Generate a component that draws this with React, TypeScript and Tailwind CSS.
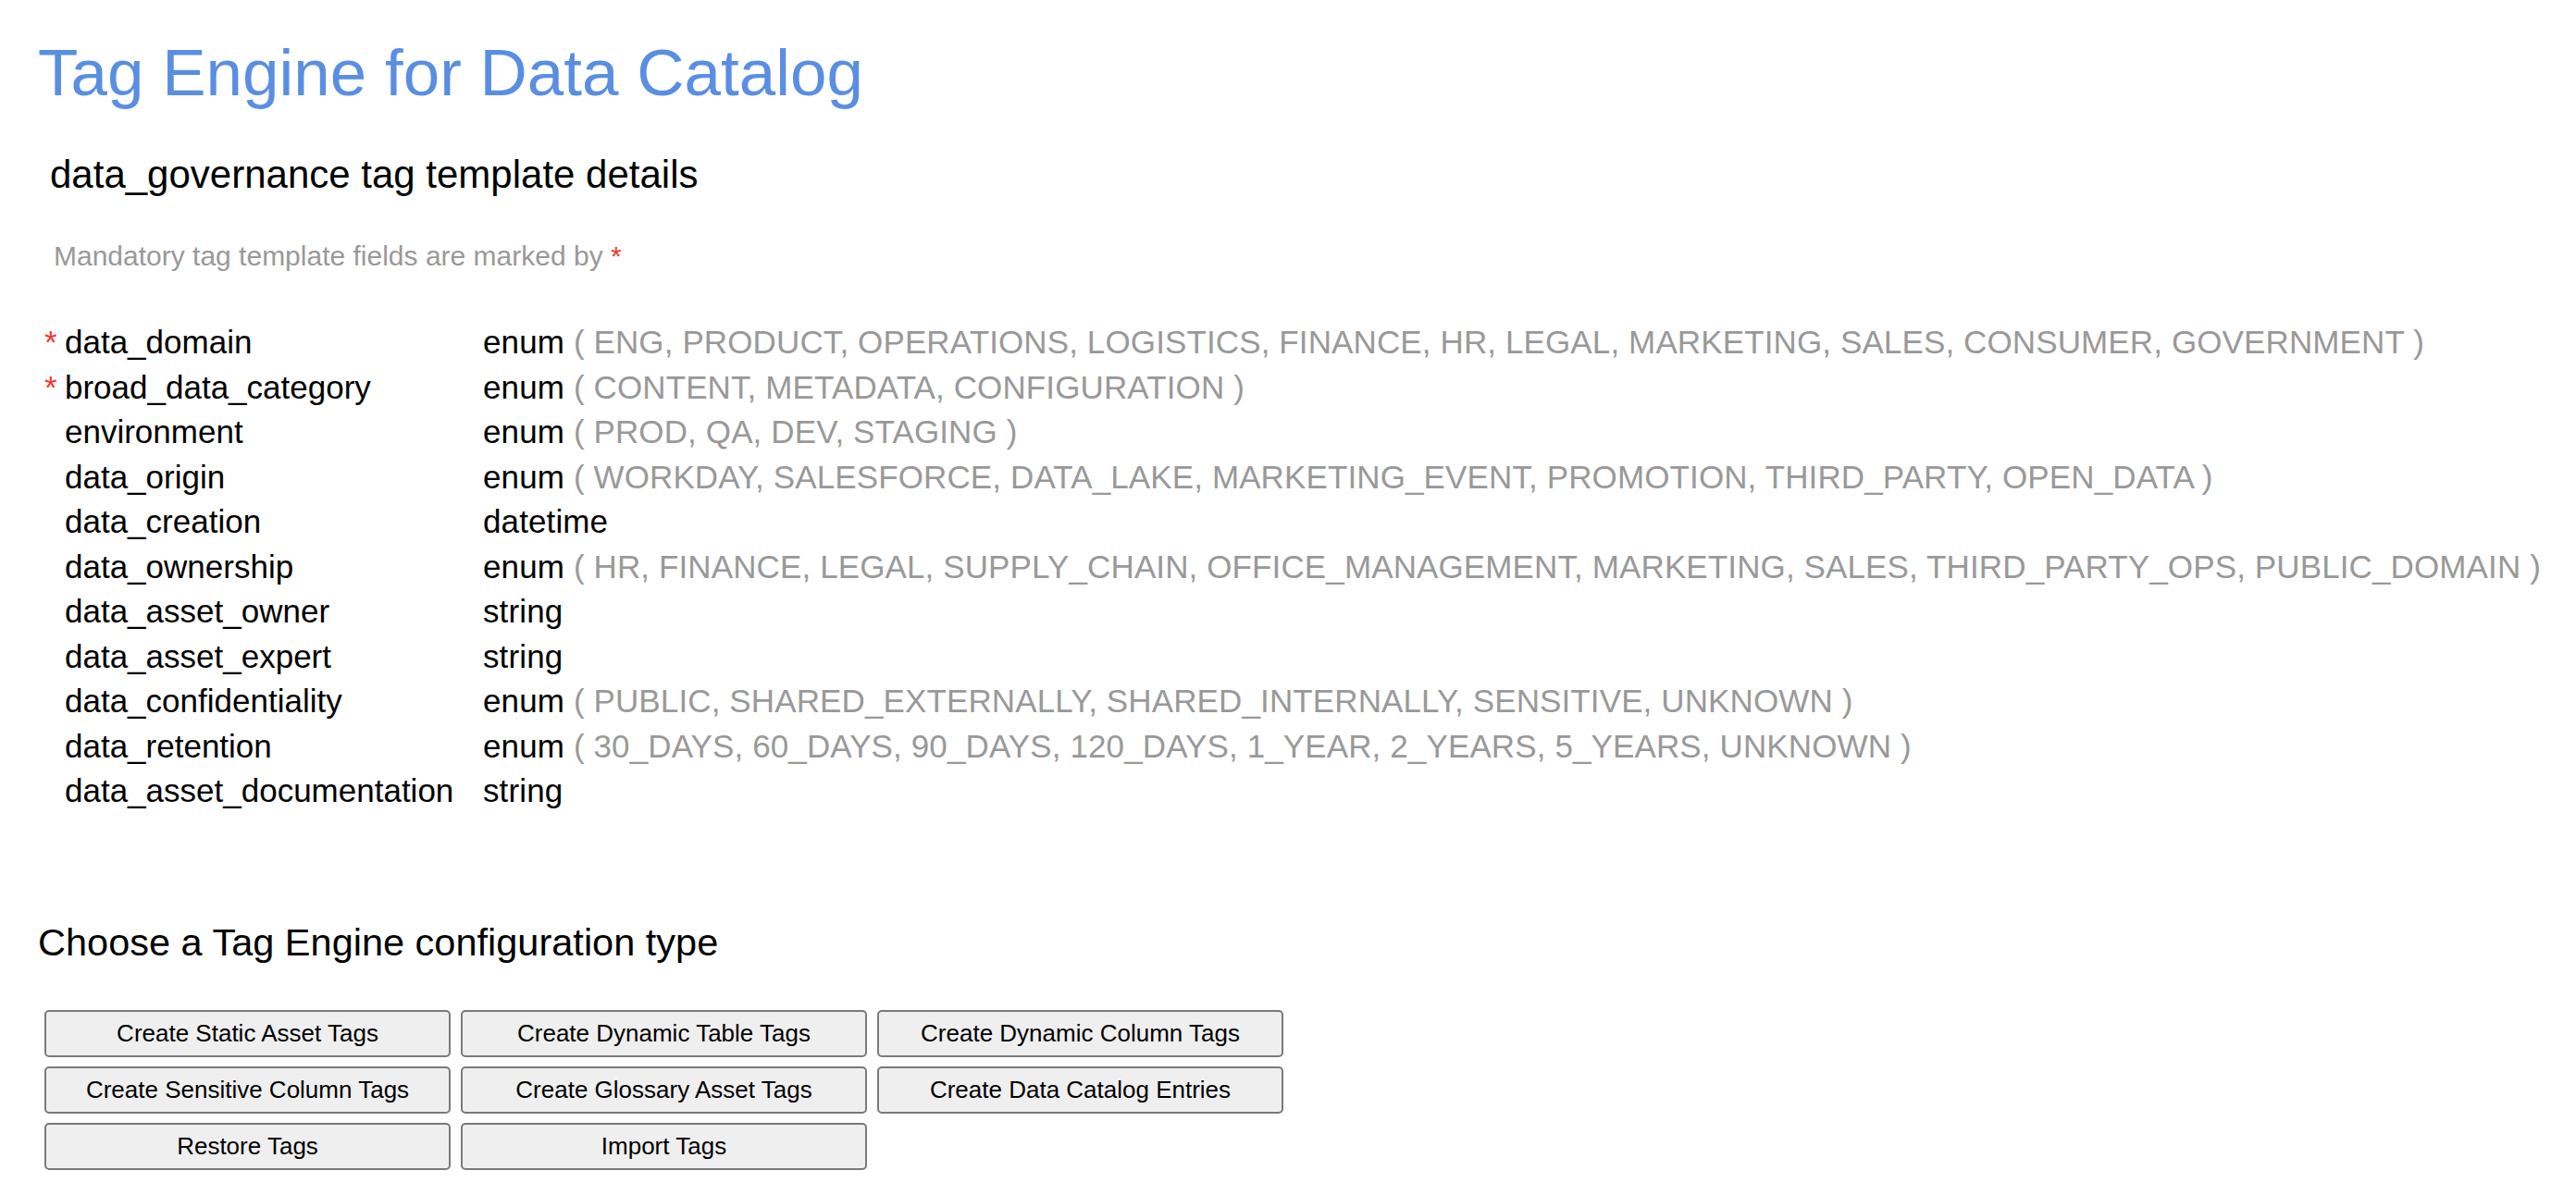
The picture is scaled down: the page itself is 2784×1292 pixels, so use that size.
import React from "react";

type Field = {
  name: string;
  type: string;
  required?: boolean;
  values?: string[];
};

const fields: Field[] = [
  {
    name: "data_domain",
    type: "enum",
    required: true,
    values: ["ENG", "PRODUCT", "OPERATIONS", "LOGISTICS", "FINANCE", "HR", "LEGAL", "MARKETING", "SALES", "CONSUMER", "GOVERNMENT"],
  },
  { name: "broad_data_category", type: "enum", required: true, values: ["CONTENT", "METADATA", "CONFIGURATION"] },
  { name: "environment", type: "enum", values: ["PROD", "QA", "DEV", "STAGING"] },
  {
    name: "data_origin",
    type: "enum",
    values: ["WORKDAY", "SALESFORCE", "DATA_LAKE", "MARKETING_EVENT", "PROMOTION", "THIRD_PARTY", "OPEN_DATA"],
  },
  { name: "data_creation", type: "datetime" },
  {
    name: "data_ownership",
    type: "enum",
    values: ["HR", "FINANCE", "LEGAL", "SUPPLY_CHAIN", "OFFICE_MANAGEMENT", "MARKETING", "SALES", "THIRD_PARTY_OPS", "PUBLIC_DOMAIN"],
  },
  { name: "data_asset_owner", type: "string" },
  { name: "data_asset_expert", type: "string" },
  {
    name: "data_confidentiality",
    type: "enum",
    values: ["PUBLIC", "SHARED_EXTERNALLY", "SHARED_INTERNALLY", "SENSITIVE", "UNKNOWN"],
  },
  {
    name: "data_retention",
    type: "enum",
    values: ["30_DAYS", "60_DAYS", "90_DAYS", "120_DAYS", "1_YEAR", "2_YEARS", "5_YEARS", "UNKNOWN"],
  },
  { name: "data_asset_documentation", type: "string" },
];

const actions = [
  "Create Static Asset Tags",
  "Create Dynamic Table Tags",
  "Create Dynamic Column Tags",
  "Create Sensitive Column Tags",
  "Create Glossary Asset Tags",
  "Create Data Catalog Entries",
  "Restore Tags",
  "Import Tags",
];

export default function App() {
  return (
    <div className="min-h-screen bg-white px-[41px] font-['Liberation_Sans',Arial,sans-serif] text-black">
      <h1 className="pt-[43px] text-[71px] leading-none text-[#5a8ee3]">Tag Engine for Data Catalog</h1>

      <h3 className="mt-[54px] ml-[13px] text-[42px] leading-none">data_governance tag template details</h3>

      <p className="mt-[52px] ml-[17px] text-[30px] leading-none text-[#999999]">
        Mandatory tag template fields are marked by <span className="text-[#f03a2e]">*</span>
      </p>

      {/* template fields */}
      <div className="mt-[54px] ml-[7px] flex flex-col text-[35px] leading-[48.5px]">
        {fields.map((f) => (
          <div key={f.name} className="flex whitespace-nowrap">
            <span className="w-[22px] shrink-0 text-[#f03a2e]">{f.required ? "*" : ""}</span>
            <span className="w-[452px] shrink-0">{f.name}</span>
            <span className="tracking-[0.12px]">
              {f.type}
              {f.values && <span className="text-[#999999]"> ( {f.values.join(", ")} )</span>}
            </span>
          </div>
        ))}
      </div>

      <h3 className="mt-[118px] text-[41.5px] leading-none">Choose a Tag Engine configuration type</h3>

      <div className="mt-[53px] ml-[7px] grid w-max grid-cols-[439px_439px_439px] gap-x-[11px] gap-y-[10px]">
        {actions.map((a) => (
          <button
            key={a}
            className="h-[51px] rounded-[5px] border-2 border-[#7a7a7a] bg-[#efefef] text-[26px] text-black"
          >
            {a}
          </button>
        ))}
      </div>
    </div>
  );
}
